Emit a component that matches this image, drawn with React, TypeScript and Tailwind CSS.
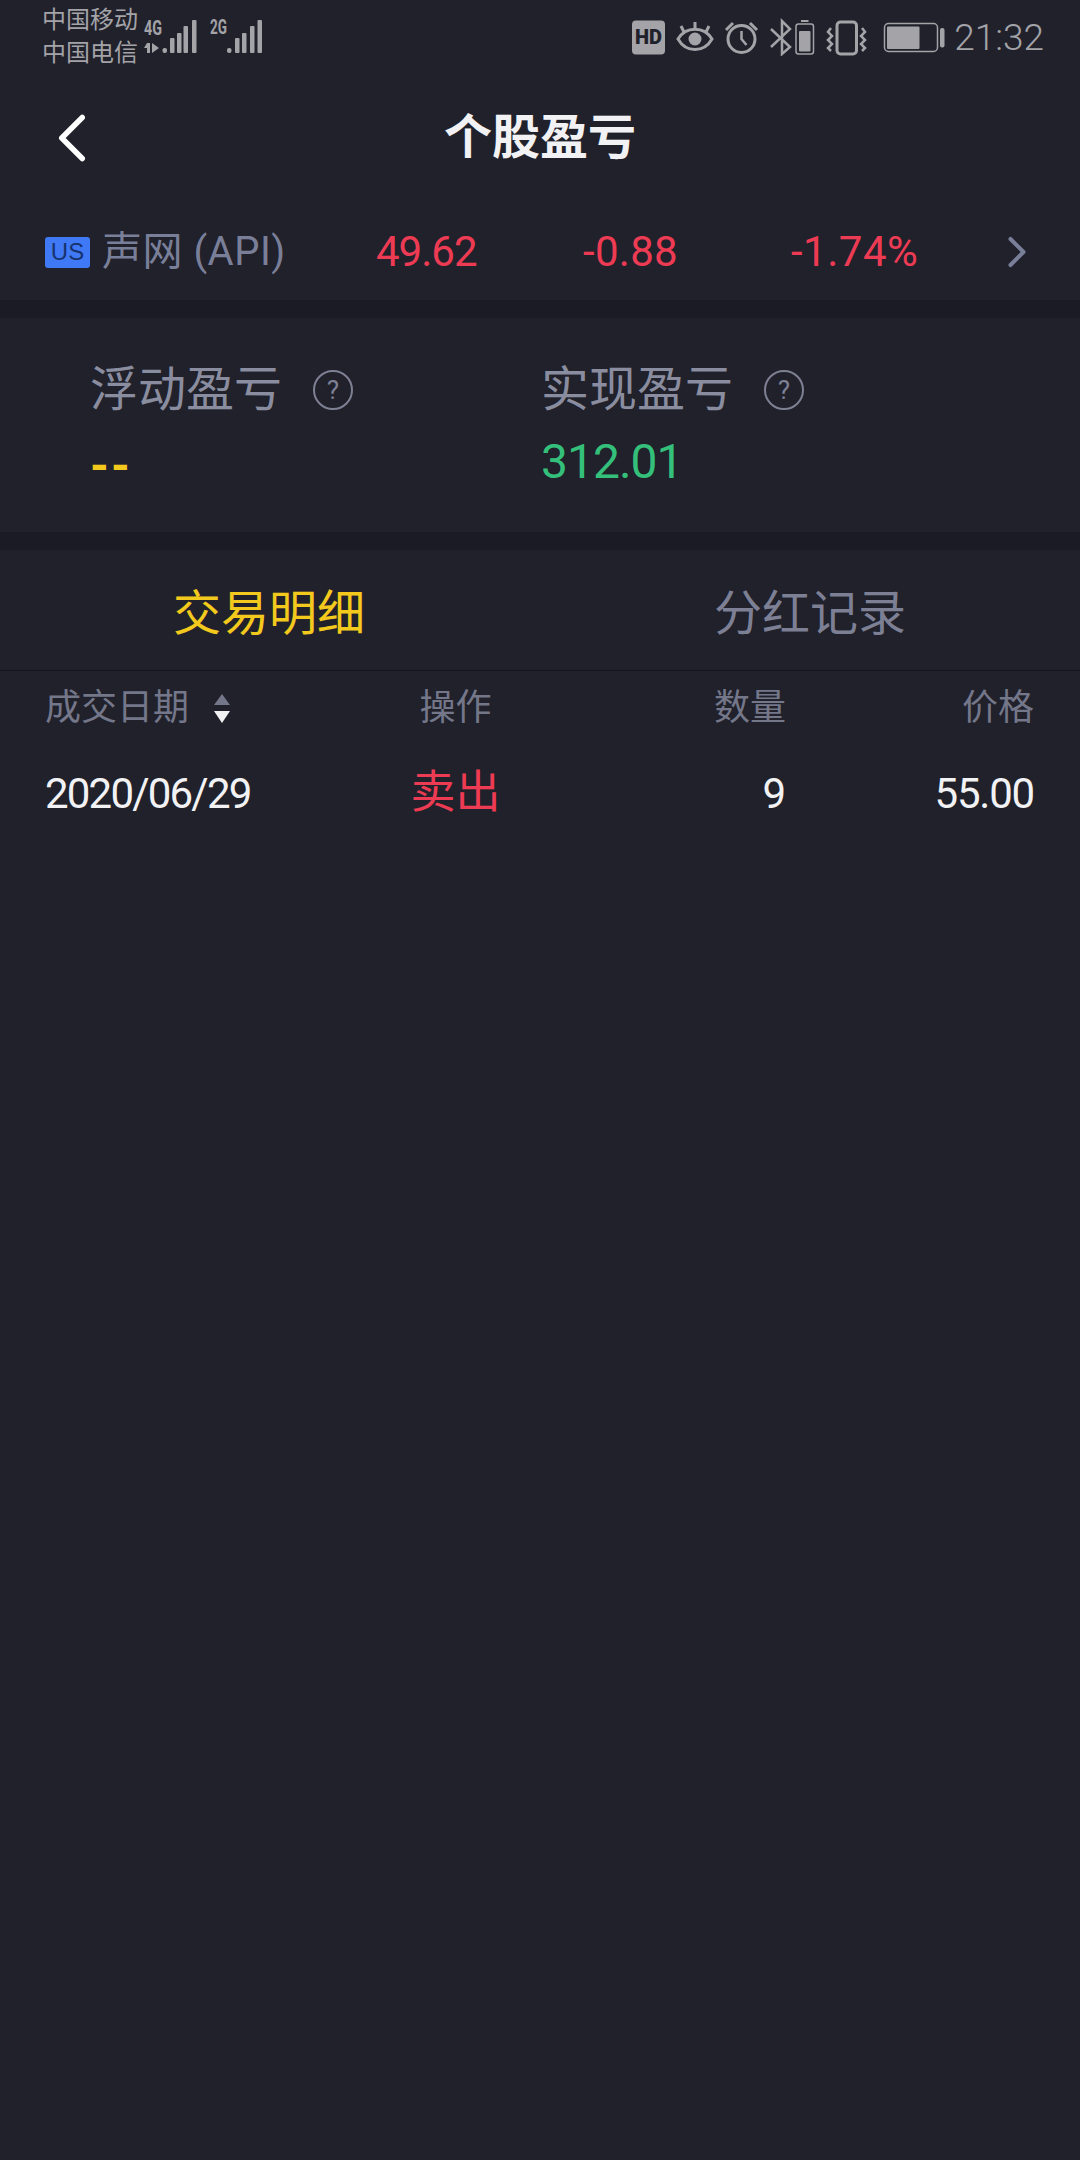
import { ChevronLeft, ChevronRight } from 'lucide-react'

const cols = 'grid grid-cols-[310px_201px_230px_248px] items-center pl-[45px]'

function Signals() {
  return (
    <svg className="overflow-visible" width="120" height="40" viewBox="143 16 120 40" fill="#a3a3a8">
      <text x="144" y="35" fontSize="20" fontWeight="700" fontFamily="Roboto" textLength="18" lengthAdjust="spacingAndGlyphs">4G</text>
      <rect x="147" y="43" width="3" height="10" />
      <path d="M144 48l3-5v5zM152 43l7 5-7 5z" />
      <rect x="162.5" y="48" width="4.5" height="5" rx="2" />
      <rect x="170" y="38" width="4.5" height="15" rx="1" />
      <rect x="177" y="33" width="4.5" height="20" rx="1" />
      <rect x="183.5" y="26" width="4.5" height="27" rx="1" />
      <rect x="192" y="20" width="4.5" height="33" rx="1" />
      <text x="210" y="34" fontSize="20" fontWeight="700" fontFamily="Roboto" textLength="17" lengthAdjust="spacingAndGlyphs">2G</text>
      <rect x="227" y="48" width="4.5" height="5" rx="2" />
      <rect x="235" y="38" width="4.5" height="15" rx="1" />
      <rect x="242" y="33" width="4.5" height="20" rx="1" />
      <rect x="250" y="26" width="4.5" height="27" rx="1" />
      <rect x="257.5" y="20" width="4.5" height="33" rx="1" />
    </svg>
  )
}

function StatusIcons() {
  const c = '#a3a3a8'
  return (
    <svg width="314" height="38" viewBox="632 18 314 38" fill="none" stroke={c} strokeWidth="2.5">
      {/* HD */}
      <rect x="632" y="20.5" width="33" height="34" rx="4" fill={c} stroke="none" />
      <text x="635" y="44" fontSize="20" fontWeight="900" fontFamily="Roboto" fill="#20212b" stroke="none" textLength="27" lengthAdjust="spacingAndGlyphs">HD</text>
      {/* eye */}
      <path d="M678 39c8-13 26-13 34 0-8 14-26 14-34 0z" strokeWidth="3" />
      <circle cx="695" cy="39" r="6.5" fill={c} stroke="none" />
      <path d="M695 22v6M681 26l3 6M709 26l-3 6" strokeWidth="3" />
      {/* alarm */}
      <circle cx="741.5" cy="39" r="13.5" strokeWidth="3" />
      <path d="M741.5 31v8l5 6" />
      <path d="M726 30l7-7M757 30l-7-7" strokeWidth="3" />
      {/* bluetooth */}
      <path d="M771 29l19 18-8 7V21l8 8-19 18" />
      {/* small battery */}
      <rect x="796" y="24" width="17.5" height="30" rx="2.5" strokeWidth="1.5" />
      <rect x="801" y="20" width="7.5" height="2" fill={c} stroke="none" />
      <rect x="799" y="31" width="11.5" height="20.5" rx="1" fill={c} stroke="none" />
      {/* vibrate */}
      <rect x="837" y="22" width="19.5" height="32" rx="3.5" strokeWidth="3" />
      <path d="M831 28l-3 4 4 4-4 4 4 4-4 4 3 3M862 28l3 4-4 4 4 4-4 4 4 4-3 3" />
      {/* battery */}
      <rect x="884.5" y="23.5" width="53" height="28" rx="4" strokeWidth="1.5" />
      <rect x="887" y="26.5" width="32.5" height="22.5" rx="1" fill={c} stroke="none" />
      <rect x="940" y="28" width="4.5" height="19.5" rx="2" fill={c} stroke="none" />
    </svg>
  )
}

function HelpIcon() {
  return (
    <div className="flex h-[40px] w-[40px] items-center justify-center rounded-full border-[2.5px] border-[#7e8094] text-[26px] leading-none text-[#7e8094]">
      ?
    </div>
  )
}

export default function App() {
  return (
    <div className="flex h-[2160px] w-[1080px] flex-col bg-[#20212b] font-['Roboto','Noto_Sans_CJK_SC',sans-serif]">
      {/* Status bar */}
      <div className="flex h-[75px] items-start">
        <div className="ml-[42px] mt-[4px] w-[101px] text-[24px] leading-[33px] text-[#a3a3a8]">
          <div>中国移动</div>
          <div>中国电信</div>
        </div>
        <div className="mt-[16px]">
          <Signals />
        </div>
        <div className="ml-auto mt-[18px]">
          <StatusIcons />
        </div>
        <div className="ml-[8px] mr-[36px] mt-[17px] text-[37px] font-light leading-[42px] text-[#a3a3a8]">21:32</div>
      </div>

      {/* Header */}
      <div className="relative flex h-[126px] items-center justify-center">
        <ChevronLeft className="absolute left-[31px] top-[22px] text-white" size={82} strokeWidth={1.6} />
        <h1 className="text-[48px] font-bold text-[#f2f2f4]">个股盈亏</h1>
      </div>

      {/* Quote */}
      <div className="flex h-[99px] items-center pl-[45px] pt-[3px] text-[42px] leading-[50px] text-[#ee3b54]">
        <div className="flex w-[331px] items-center">
          <span className="flex h-[31px] w-[45px] items-center justify-center rounded-[3px] bg-[#4079f5] font-['Liberation_Sans'] text-[24px] text-[#17336f]">US</span>
          <span className="ml-[12px] text-[40px] tracking-[0.5px] text-[#7a7f99]">声网 (API)</span>
        </div>
        <div className="w-[207px] tracking-[-1px]">49.62</div>
        <div className="w-[208px] tracking-[0.3px]">-0.88</div>
        <div className="w-[200px] tracking-[0.5px]">-1.74%</div>
        <ChevronRight className="text-[#7a7f99]" size={52} strokeWidth={1.85} />
      </div>

      <div className="h-[18px] bg-[#1a1b25]" />

      {/* P&L */}
      <div className="flex h-[214px] pl-[90px] pt-[45px]">
        <div className="w-[451px]">
          <div className="flex items-center gap-[31px]">
            <span className="text-[48px] leading-[54px] text-[#8a8d9f]">浮动盈亏</span>
            <HelpIcon />
          </div>
          <div className="mt-[24px] text-[48px] font-bold leading-[50px] tracking-[2px] text-[#f2c91c]">--</div>
        </div>
        <div>
          <div className="flex items-center gap-[31px]">
            <span className="text-[48px] leading-[54px] text-[#8a8d9f]">实现盈亏</span>
            <HelpIcon />
          </div>
          <div className="mt-[20px] text-[48px] leading-[50px] tracking-[-1px] text-[#34c07a]">312.01</div>
        </div>
      </div>

      <div className="h-[18px] bg-[#1a1b25]" />

      {/* Tabs */}
      <div className="flex h-[121px] items-center gap-[349px] border-b border-[#14151b] pl-[173px] pt-[8px] text-[48px]">
        <span className="text-[#f2c91c]">交易明细</span>
        <span className="text-[#7d8095]">分红记录</span>
      </div>

      {/* Table */}
      <div className={`${cols} h-[70px] pt-[4px] text-[36px] text-[#747789]`}>
        <div className="flex items-center">
          成交日期
          <svg className="ml-[25px]" width="16" height="29" viewBox="0 0 16 29">
            <path d="M8 0L16 11H0z" fill="#747789" />
            <path d="M0 17h16L8 29z" fill="#f2f2f4" />
          </svg>
        </div>
        <div className="text-center">操作</div>
        <div className="text-right">数量</div>
        <div className="text-right">价格</div>
      </div>
      <div className={`${cols} h-[104px] text-[42px] text-[#f2f2f4]`}>
        <div className="tracking-[-1.8px]">2020/06/29</div>
        <div className="text-center text-[45px] text-[#ee3b54]">卖出</div>
        <div className="text-right">9</div>
        <div className="text-right tracking-[-1.2px]">55.00</div>
      </div>
    </div>
  )
}
